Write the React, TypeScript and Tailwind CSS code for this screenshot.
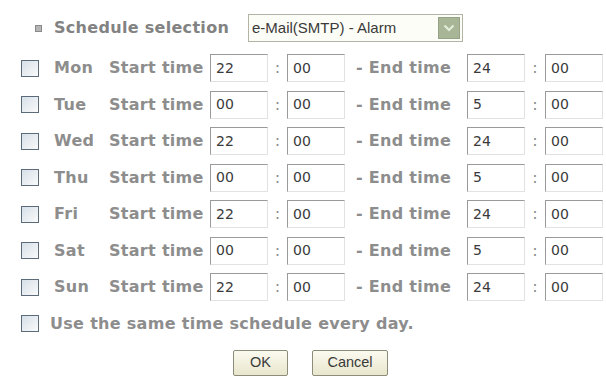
import React from 'react';

const days = [
  { d: 'Mon', s: '22', e: '24' },
  { d: 'Tue', s: '00', e: '5' },
  { d: 'Wed', s: '22', e: '24' },
  { d: 'Thu', s: '00', e: '5' },
  { d: 'Fri', s: '22', e: '24' },
  { d: 'Sat', s: '00', e: '5' },
  { d: 'Sun', s: '22', e: '24' },
];

function Box() {
  return (
    <span className="inline-block w-[18px] h-[17px] border-[1.5px] border-[#5b6b79] bg-gradient-to-br from-[#d6e0e8] to-[#fafafa] shrink-0" />
  );
}

function Field({ v }: { v: string }) {
  return (
    <div className="w-[58px] h-[28px] flex items-center pl-[5px] bg-white border border-t-[#9a9a9a] border-l-[#9a9a9a] border-r-[#e2e2e2] border-b-[#e2e2e2] text-[14px] font-normal tracking-normal text-[#3a3a3a] font-['DejaVu_Sans',sans-serif] shrink-0">
      {v}
    </div>
  );
}

export default function App() {
  return (
    <div className="w-[606px] h-[378px] bg-white font-['DejaVu_Sans',sans-serif] font-bold text-[16px] tracking-[0.3px] text-[#8d8d8d] overflow-hidden">
      <div className="flex items-center h-[30px] mt-[13px]">
        <span className="ml-[35px] w-[7px] h-[7px] border border-[#8a8a8a] bg-[#b5b5b5] shrink-0" />
        <span className="ml-[12px] w-[194px] text-[#828282]">Schedule selection</span>
        <div className="w-[215px] h-[28px] flex items-center justify-between border border-[#b3b3a6] bg-[#fdfdf7] pl-[3px] pr-[2px] tracking-normal">
          <span className="font-['Liberation_Sans',sans-serif] font-normal text-[15px] text-[#3a3a3a]">e-Mail(SMTP) - Alarm</span>
          <span className="w-[22px] h-[22px] flex items-center justify-center bg-[#a8b596] border border-[#97a386]">
            <svg width="12" height="8" viewBox="0 0 12 8">
              <path d="M1.5 1.5 L6 6 L10.5 1.5" stroke="#e4ecd8" strokeWidth="2.2" fill="none" />
            </svg>
          </span>
        </div>
      </div>
      <div className="mt-[7px]">
        {days.map(r => (
          <div key={r.d} className="flex items-center h-[36.5px]">
            <span className="ml-[21px] mr-[15px] flex"><Box /></span>
            <span className="w-[55px]">{r.d}</span>
            <span className="w-[101px]">Start time</span>
            <Field v={r.s} />
            <span className="w-[19px] text-center font-normal">:</span>
            <Field v="00" />
            <span className="w-[122px] pl-[11px]">- End time</span>
            <Field v={r.e} />
            <span className="w-[20px] text-center font-normal">:</span>
            <Field v="00" />
          </div>
        ))}
        <div className="flex items-center h-[36.5px]">
          <span className="ml-[21px] mr-[11px] flex"><Box /></span>
          <span>Use the same time schedule every day.</span>
        </div>
      </div>
      <div className="flex mt-[8px] ml-[233px] gap-[24px] font-['Liberation_Sans',sans-serif] font-normal tracking-normal text-[14.5px] text-[#3a3a3a]">
        <button className="w-[55px] h-[26px] border border-[#8c8c7a] bg-gradient-to-b from-[#fbfaf0] to-[#e9e6cc] rounded-[2px]">OK</button>
        <button className="w-[76px] h-[26px] border border-[#8c8c7a] bg-gradient-to-b from-[#fbfaf0] to-[#e9e6cc] rounded-[2px]">Cancel</button>
      </div>
    </div>
  );
}
